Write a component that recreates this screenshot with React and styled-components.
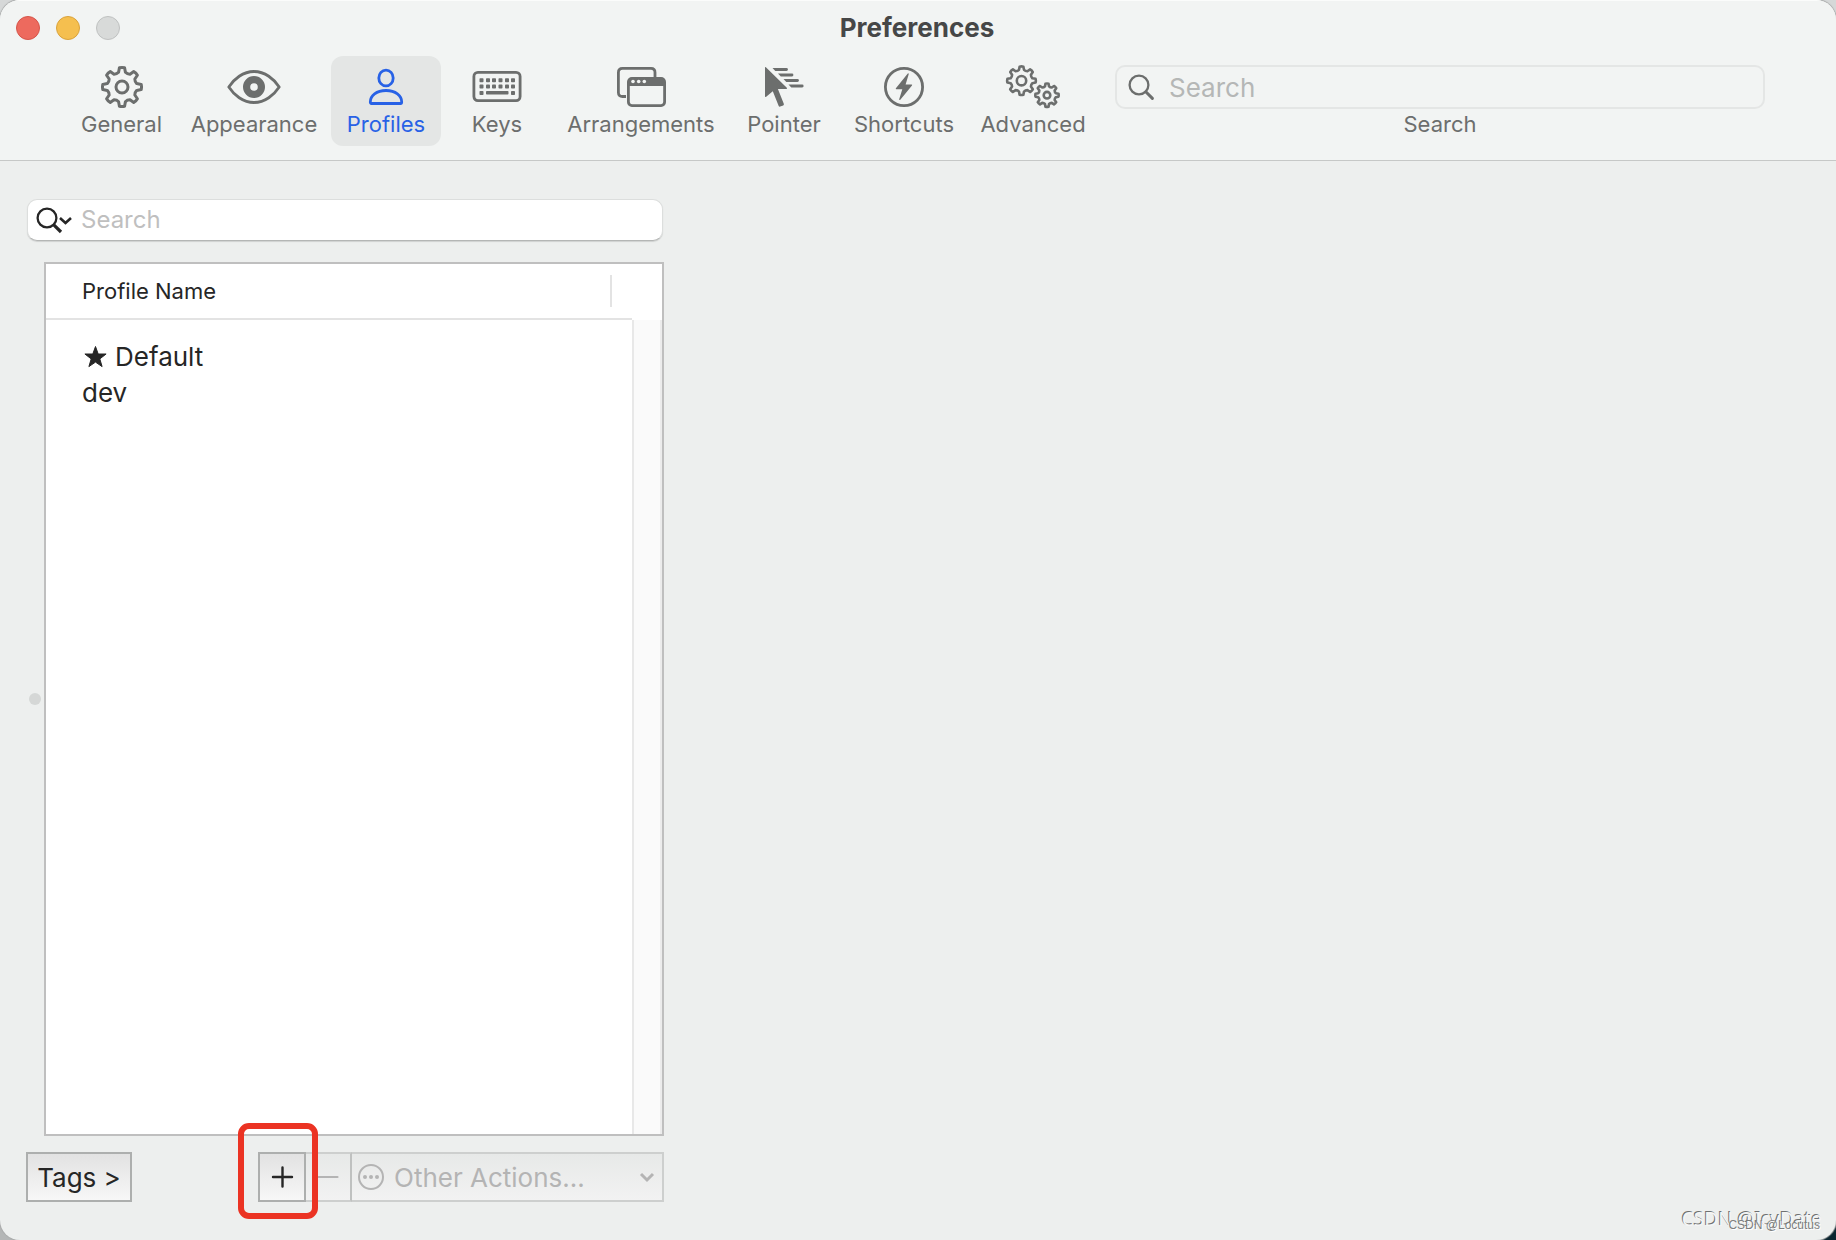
import React from 'react';
import styled, { createGlobalStyle } from 'styled-components';

const GlobalStyle = createGlobalStyle`
  * {
    box-sizing: border-box;
  }
  body {
    margin: 0;
    background: linear-gradient(#d6d8d8 50%, transparent 50%), linear-gradient(90deg, #b4b6b6 50%, #0b2530 50%);
    font-family: Inter, 'Liberation Sans', sans-serif;
    color: #262626;
  }
  button, input, select {
    font-family: inherit;
    margin: 0;
  }
`;

// outline of a cog wheel with rounded teeth
const gearPath = (cx, cy, outer, inner, teeth = 8) => {
    const step = (Math.PI * 2) / teeth;
    const at = (r, a) => `${(cx + r * Math.sin(a)).toFixed(2)} ${(cy - r * Math.cos(a)).toFixed(2)}`;
    let d = '';
    for (let i = 0; i < teeth; i++) {
        const a = i * step;
        const valley = a + step / 2;
        d += `${i === 0 ? 'M' : 'L'}${at(outer, a - step * 0.17)}`;
        d += `Q${at(outer * 1.03, a)} ${at(outer, a + step * 0.17)}`;
        d += `L${at(inner * 1.05, a + step * 0.29)}`;
        d += `Q${at(inner * 0.96, valley)} ${at(inner * 1.05, valley + step * 0.21)}`;
    }
    return d + 'Z';
};

const GearIcon = () => (
    <svg width="44" height="44" fill="none" stroke="currentColor" strokeWidth="3" strokeLinejoin="round">
        <path d={gearPath(22, 22, 19.4, 14.4)} />
        <circle cx="22" cy="22" r="6" />
    </svg>
);

const EyeIcon = () => (
    <svg width="54" height="44">
        <path d="M1.8 22C7 14 16 6.5 27 6.5S47 14 52.2 22C47 30 38 37.5 27 37.5S7 30 1.8 22Z" fill="none" stroke="currentColor" strokeWidth="2.8" strokeLinejoin="round" />
        <circle cx="27" cy="22" r="7.4" fill="none" stroke="currentColor" strokeWidth="7.2" />
    </svg>
);

const PersonIcon = () => (
    <svg width="38" height="44" fill="none" stroke="currentColor" strokeWidth="2.8">
        <ellipse cx="19" cy="13" rx="7.2" ry="7.9" />
        <path d="M4.5 38.5Q3.3 38.5 3.3 37C3.3 30.5 9.5 25.5 19 25.5S34.7 30.5 34.7 37Q34.7 38.5 33.5 38.5Z" strokeLinejoin="round" />
    </svg>
);

const keyRow = (y) => [9.5, 16, 22, 28.5, 35, 41].map((x) => (
    <rect key={`${x}-${y}`} x={x - 2} y={y} width="4" height="4" rx="0.8" />
));

const KeyboardIcon = () => (
    <svg width="50" height="44" fill="currentColor">
        <rect x="1.9" y="7.4" width="46.2" height="28.2" rx="4" fill="none" stroke="currentColor" strokeWidth="2.8" />
        {keyRow(13.3)}
        {keyRow(19.6)}
        <rect x="7.5" y="26" width="4" height="4" rx="0.8" />
        <rect x="14" y="26" width="22.5" height="3.6" rx="0.8" />
        <rect x="39" y="26" width="4" height="4" rx="0.8" />
    </svg>
);

const WindowsIcon = () => (
    <svg width="50" height="44">
        <path d="M10 31.5H6.5Q2.4 31.5 2.4 27.5V7.5Q2.4 3.4 6.5 3.4H35Q39 3.4 39 7.5V12" fill="none" stroke="currentColor" strokeWidth="2.8" />
        <rect x="12.4" y="13.4" width="36.2" height="27.2" rx="3.5" fill="none" stroke="currentColor" strokeWidth="2.8" />
        <path d="M12 21V16Q12 13 15 13H46Q49 13 49 16V21Z" fill="currentColor" />
        <g fill="#f2f4f3">
            <circle cx="17" cy="16.5" r="1.8" />
            <circle cx="22.7" cy="16.5" r="1.8" />
            <circle cx="28.3" cy="16.5" r="1.8" />
        </g>
    </svg>
);

const PointerIcon = () => (
    <svg width="40" height="44" fill="currentColor">
        <path d="M1 2.6Q1 1.400 1.900 2.300L22.8 22.8Q23.6 23.8 22.4 23.9L13.9 24L19.8 38.8Q20.2 39.9 19.2 40.4L16.2 41.6Q15.1 42 14.7 41L8.8 26.2L2.2 31.7Q1 32.5 1 31.2Z" />
        <path d="M8.5 3.1H22.5A1.400 1.400 0 0 1 22.5 5.900H11.300Z" />
        <path d="M14 8.600H28A1.400 1.400 0 0 1 28 11.400H16.800Z" />
        <path d="M19.500 14.100H33.500A1.400 1.400 0 0 1 33.500 16.900H22.300Z" />
        <path d="M24.500 19.600H38.200A1.400 1.400 0 0 1 38.200 22.400H27.300Z" />
    </svg>
);

const BoltIcon = () => (
    <svg width="44" height="44">
        <circle cx="22" cy="22" r="18.6" fill="none" stroke="currentColor" strokeWidth="2.8" />
        <path d="M25.8 8.5L13.9 23.2Q13.3 24.2 14.5 24.2H20.3L17.2 34.3Q17.2 35.6 18.3 34.7L30 20.6Q30.6 19.6 29.5 19.5H23.6L26.7 9.2Q26.8 7.8 25.8 8.5Z" fill="currentColor" />
    </svg>
);

const GearsIcon = () => (
    <svg width="56" height="44" fill="none" stroke="currentColor" strokeWidth="2.6" strokeLinejoin="round">
        <path d={gearPath(16.5, 15.7, 14.2, 10.6)} />
        <circle cx="16.5" cy="15.7" r="4.7" />
        <path d={gearPath(42, 30.2, 11.6, 8.6)} />
        <circle cx="42" cy="30.2" r="3.3" />
    </svg>
);

const MagnifierIcon = () => (
    <svg width="28" height="28" fill="none" stroke="currentColor" strokeWidth="2.3" strokeLinecap="round">
        <circle cx="12" cy="12" r="9.4" />
        <path d="M18.8 18.8L25.4 25.4" strokeWidth="3" />
    </svg>
);

const MagnifierMenuIcon = () => (
    <svg width="38" height="28" fill="none" stroke="currentColor" strokeWidth="2.3">
        <circle cx="12" cy="12" r="9.4" />
        <path d="M18.8 18.8L26 26" strokeWidth="3.2" />
        <path d="M25 12L30.5 17L36 12" strokeWidth="2.6" />
    </svg>
);

const StarIcon = () => (
    <svg width="26" height="24" viewBox="-1 0 26 24" fill="currentColor" stroke="currentColor" strokeWidth="1" strokeLinejoin="round">
        <path d="M12.5 1.5L15.2 9H23.1L16.8 13.900L19.1 21.6L12.5 17.1L5.900 21.6L8.2 13.900L1.900 9H9.8Z" />
    </svg>
);

const PlusIcon = () => (
    <svg width="24" height="24" stroke="currentColor" strokeWidth="2.4" strokeLinecap="round">
        <path d="M12.5 2.5V21.5M3 12H22" />
    </svg>
);

const MinusIcon = () => (
    <svg width="24" height="24" stroke="currentColor" strokeWidth="2.2" strokeLinecap="round">
        <path d="M2.5 12H21.5" />
    </svg>
);

const EllipsisIcon = () => (
    <svg width="28" height="28" fill="currentColor">
        <circle cx="14" cy="14" r="12" fill="none" stroke="currentColor" strokeWidth="2" />
        <circle cx="8" cy="14" r="2" />
        <circle cx="14" cy="14" r="2" />
        <circle cx="20" cy="14" r="2" />
    </svg>
);

const ChevronIcon = () => (
    <svg width="16" height="16" fill="none" stroke="currentColor" strokeWidth="3">
        <path d="M2 5L8 11L14 5" />
    </svg>
);

const toolbarItems = [
    { label: 'General', icon: <GearIcon />, width: 111 },
    { label: 'Appearance', icon: <EyeIcon />, width: 154 },
    { label: 'Profiles', icon: <PersonIcon />, width: 110, active: true },
    { label: 'Keys', icon: <KeyboardIcon />, width: 112 },
    { label: 'Arrangements', icon: <WindowsIcon />, width: 176 },
    { label: 'Pointer', icon: <PointerIcon />, width: 110 },
    { label: 'Shortcuts', icon: <BoltIcon />, width: 130 },
    { label: 'Advanced', icon: <GearsIcon />, width: 128 },
];

const profiles = [
    { name: 'Default', starred: true },
    { name: 'dev' },
];

const App = () => {
    return (
        <>
            <GlobalStyle />
            <Window>
                <Header>
                    <TitleBar>
                        <Lights>
                            <Light type="button" aria-label="Close" $fill="#ed6a5e" $edge="#d5554a" />
                            <Light type="button" aria-label="Minimize" $fill="#f5bf4f" $edge="#d9a23c" />
                            <Light type="button" aria-label="Zoom" $fill="#d8dad9" $edge="#bfc1c0" />
                        </Lights>
                        <Title>Preferences</Title>
                    </TitleBar>
                    <Toolbar>
                        {toolbarItems.map((item) => (
                            <ToolbarButton key={item.label} type="button" $width={item.width} $active={item.active}>
                                <IconSlot>{item.icon}</IconSlot>
                                {item.label}
                            </ToolbarButton>
                        ))}
                        <ToolbarSearch>
                            <ToolbarField>
                                <MagnifierIcon />
                                <ToolbarInput id="toolbar-search" type="text" placeholder="Search" />
                            </ToolbarField>
                            <label htmlFor="toolbar-search">Search</label>
                        </ToolbarSearch>
                    </Toolbar>
                </Header>
                <Main>
                    <Sidebar>
                        <ProfileField>
                            <MagnifierMenuIcon />
                            <ProfileInput type="text" placeholder="Search" aria-label="Search profiles" />
                        </ProfileField>
                        <SplitView>
                            <SplitHandle />
                            <ListBox>
                                <ProfileTable>
                                    <thead>
                                        <tr>
                                            <th scope="col"><HeadCell>Profile Name</HeadCell></th>
                                        </tr>
                                    </thead>
                                    <tbody>
                                        {profiles.map((profile) => (
                                            <tr key={profile.name}>
                                                <td>
                                                    <ProfileName>
                                                        {profile.starred && <StarIcon />}
                                                        {profile.name}
                                                    </ProfileName>
                                                </td>
                                            </tr>
                                        ))}
                                    </tbody>
                                </ProfileTable>
                                <ScrollTrack />
                            </ListBox>
                        </SplitView>
                        <Actions>
                            <TagsButton type="button">Tags &gt;</TagsButton>
                            <ActionGroup>
                                <AddSlot>
                                    <AddButton type="button" aria-label="Add profile"><PlusIcon /></AddButton>
                                    <Highlight />
                                </AddSlot>
                                <RemoveButton type="button" aria-label="Remove profile" disabled><MinusIcon /></RemoveButton>
                                <ActionMenu>
                                    <EllipsisIcon />
                                    <ActionSelect aria-label="Other actions" disabled>
                                        <option>Other Actions...</option>
                                    </ActionSelect>
                                    <ChevronIcon />
                                </ActionMenu>
                            </ActionGroup>
                        </Actions>
                    </Sidebar>
                    <Detail />
                </Main>
                <Watermark>CSDN @IcyDate</Watermark>
                <SmallWatermark>CSDN @Locutus</SmallWatermark>
            </Window>
        </>
    )
};

const Window = styled.div`
    position: relative;
    display: flex;
    flex-direction: column;
    min-height: 100vh;
    overflow: hidden;
    background: #edefee;
    border-radius: 20px;
    box-shadow: 0 0 1px 1px #a9abab;
`;

const Header = styled.header`
    background: #f2f4f3;
    border-top: 1px solid #fbfcfb;
    border-bottom: 1px solid #c6c8c7;
`;

const TitleBar = styled.div`
    display: grid;
    grid-template-columns: 1fr auto 1fr;
    align-items: center;
    height: 55px;
    padding: 0 18px 2px 16px;
`;

const Lights = styled.div`
    display: flex;
    gap: 16px;
`;

const Light = styled.button`
    width: 24px;
    height: 24px;
    padding: 0;
    border: 1px solid ${({ $edge }) => $edge};
    border-radius: 50%;
    background: ${({ $fill }) => $fill};
`;

const Title = styled.h1`
    margin: 0;
    font-size: 26px;
    line-height: 32px;
    font-weight: 700;
    color: #464747;
`;

const Toolbar = styled.div`
    display: flex;
    align-items: flex-start;
    padding: 0 71px 14px 66px;
    font-size: 22px;
    line-height: 28px;
    color: #6c6e6d;
`;

const ToolbarButton = styled.button`
    display: flex;
    flex-direction: column;
    align-items: center;
    gap: 1px;
    flex: 0 0 ${({ $width }) => $width}px;
    padding: 9px 0 8px;
    border: 0;
    border-radius: 12px;
    background: ${({ $active }) => ($active ? '#e4e6e5' : 'transparent')};
    color: ${({ $active }) => ($active ? '#2862e6' : '#6c6e6d')};
    font-size: 22px;
    line-height: 28px;
    white-space: nowrap;
`;

const IconSlot = styled.span`
    display: flex;
    align-items: center;
    height: 44px;
`;

const ToolbarSearch = styled.div`
    display: flex;
    flex-direction: column;
    align-items: center;
    gap: 1px;
    flex: 1;
    min-width: 0;
    padding-top: 9px;
    margin-left: 18px;
`;

const ToolbarField = styled.div`
    display: flex;
    align-items: center;
    gap: 14px;
    align-self: stretch;
    height: 44px;
    padding: 0 12px 0 10px;
    border: 2px solid #e4e6e5;
    border-radius: 10px;
`;

const ToolbarInput = styled.input`
    flex: 1;
    min-width: 0;
    padding: 0;
    border: 0;
    outline: 0;
    background: transparent;
    font-size: 26px;
    &::placeholder {
      color: #b5b7b6;
    }
`;

const Main = styled.main`
    display: flex;
    flex: 1;
`;

const Sidebar = styled.section`
    display: flex;
    flex-direction: column;
    flex: 0 0 664px;
    padding: 38px 0 38px 26px;
`;

const Detail = styled.section`
    flex: 1;
`;

const ProfileField = styled.div`
    display: flex;
    align-items: center;
    gap: 8px;
    height: 42px;
    margin: 0 1px 21px;
    padding: 0 10px 1px 7px;
    border: 1px solid #dcdedd;
    border-bottom-color: #b4b6b5;
    border-radius: 10px;
    background: #fff;
    box-shadow: 0 1px 1px #cfd1d0;
`;

const ProfileInput = styled.input`
    flex: 1;
    min-width: 0;
    padding: 0;
    border: 0;
    outline: 0;
    background: transparent;
    font-size: 24px;
    &::placeholder {
      color: #bfbfbf;
    }
`;

const SplitView = styled.div`
    display: flex;
    align-items: stretch;
    flex: 1;
`;

const SplitHandle = styled.div`
    align-self: center;
    width: 12px;
    height: 12px;
    margin: 0 3px;
    border-radius: 50%;
    background: #d5d7d6;
`;

const ListBox = styled.div`
    display: flex;
    align-items: stretch;
    flex: 1;
    border: 2px solid #bfbfbf;
    background: #fff;
`;

const ProfileTable = styled.table`
    align-self: flex-start;
    flex: 1;
    border-spacing: 0;
    th, td {
      padding: 0;
      text-align: left;
      font-weight: 400;
    }
    th {
      height: 56px;
      border-bottom: 2px solid #e3e3e3;
    }
    tbody::before {
      content: '';
      display: block;
      height: 19px;
    }
`;

const HeadCell = styled.div`
    height: 32px;
    margin: 0 20px 0 36px;
    border-right: 2px solid #e3e3e3;
    font-size: 22px;
    line-height: 32px;
`;

const ProfileName = styled.div`
    display: flex;
    align-items: center;
    gap: 7px;
    padding-left: 36px;
    font-size: 26px;
    line-height: 36px;
`;

const ScrollTrack = styled.div`
    width: 30px;
    margin-top: 56px;
    border-left: 2px solid #e8e8e8;
    border-right: 2px solid #ececec;
    background: #fafafa;
`;

const Actions = styled.div`
    display: flex;
    justify-content: space-between;
    height: 50px;
    margin-top: 16px;
`;

const TagsButton = styled.button`
    width: 106px;
    padding: 0;
    border: 2px solid #adafae;
    background: linear-gradient(#e2e2e2, #f7f7f7);
    color: #262626;
    font-size: 26px;
    white-space: nowrap;
`;

const ActionGroup = styled.div`
    display: flex;
`;

const AddSlot = styled.div`
    position: relative;
    display: flex;
`;

const AddButton = styled.button`
    display: flex;
    align-items: center;
    justify-content: center;
    width: 48px;
    padding: 0;
    border: 2px solid #adafae;
    background: linear-gradient(#e2e2e2, #f7f7f7);
    color: #262626;
`;

const Highlight = styled.div`
    position: absolute;
    inset: -29px -12px -17px -20px;
    border: 6px solid #eb3323;
    border-radius: 11px;
    pointer-events: none;
    z-index: 1;
`;

const RemoveButton = styled.button`
    display: flex;
    align-items: center;
    justify-content: center;
    width: 46px;
    padding: 0;
    border: 2px solid #cdcfce;
    border-left: 0;
    border-right-color: #bfc1c0;
    background: linear-gradient(#e7e9e8, #f2f2f2);
    color: #b4b4b4;
`;

const ActionMenu = styled.div`
    display: flex;
    align-items: center;
    width: 312px;
    padding: 0 7px 0 5px;
    border: 2px solid #cdcfce;
    border-left: 0;
    background: linear-gradient(#e7e9e8, #f2f2f2);
    color: #b4b4b4;
`;

const ActionSelect = styled.select`
    appearance: none;
    flex: 1;
    min-width: 0;
    padding: 0 0 0 9px;
    border: 0;
    background: transparent;
    color: #b4b4b4;
    font-size: 26px;
    opacity: 1;
`;

const Watermark = styled.span`
    position: absolute;
    right: 14px;
    bottom: 11px;
    font-family: 'Noto Sans', sans-serif;
    font-size: 19px;
    line-height: 20px;
    color: #f4f5f5;
    text-shadow: -1px -1px 0 #6f7171;
`;

const SmallWatermark = styled(Watermark)`
    right: 16px;
    bottom: 5px;
    font-family: 'Liberation Sans', sans-serif;
    font-size: 12px;
    color: #7d7f7f;
    text-shadow: 1px 1px 0 #fff;
`;

export default App;
